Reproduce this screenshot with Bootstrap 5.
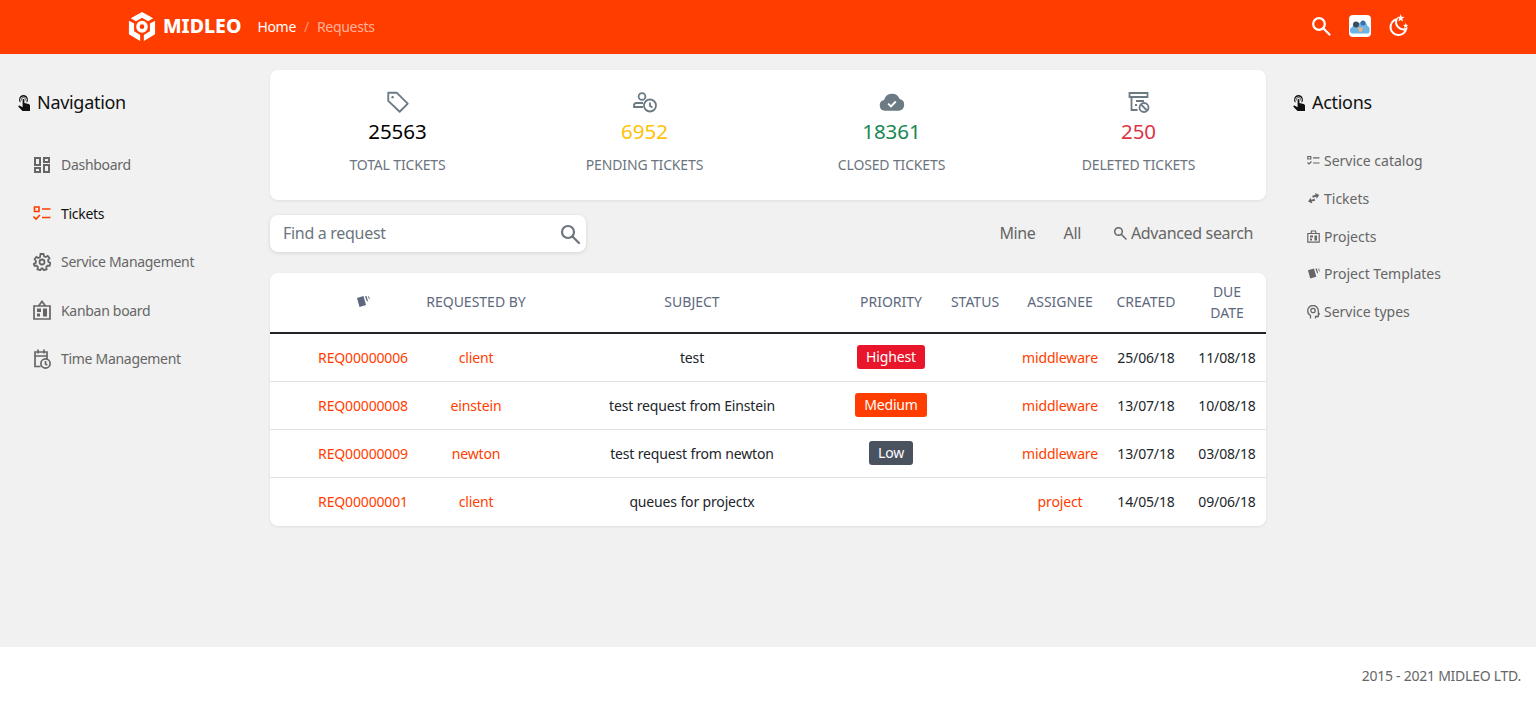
<!DOCTYPE html>
<html lang="en">
  <head>
    <meta charset="utf-8" />
    <meta name="viewport" content="width=device-width, initial-scale=1" />
    <title>Requests - MIDLEO</title>
    <link href="https://cdn.jsdelivr.net/npm/bootstrap@5.3.6/dist/css/bootstrap.min.css" rel="stylesheet" />
    <style>
      body { font-family: "Noto Sans", "Open Sans", sans-serif; font-size: 14px; background: #f1f1f1; color: #212529; }
      svg { display: block; flex: none; }
      a { text-decoration: none; }

      .top-bar { background: #ff3d00; height: 54px; padding: 0; }
      .top-inner { width: 1282px; margin: 0 0 0 128px; padding-bottom: 2px; }
      .brand-logo { gap: 7px; margin: 0 16px 0 0; padding: 0; color: #fff; }
      .brand-name { font-size: 19.5px; font-weight: 800; color: #fff; }
      .top-crumbs { font-size: 14px; letter-spacing: -.3px; --bs-breadcrumb-divider-color: rgba(255,255,255,.45); --bs-breadcrumb-item-active-color: rgba(255,255,255,.6); --bs-breadcrumb-item-padding-x: 8px; }
      .top-crumbs a { color: #fff; }
      .top-tools { gap: 18px; color: #fff; }
      .user-pic { width: 22px; height: 22px; border-radius: 4px; background: #fff; overflow: hidden; }

      .side-left { width: 270px; padding: 32px 0 0 18px; }
      .side-right { width: 270px; padding: 32px 0 0 27px; }
      .center-col { width: 996px; padding-top: 16px; }
      .side-title { font-size: 18px; font-weight: 400; letter-spacing: -.3px; color: #111; gap: 7px; height: 34px; margin: 0; }
      .left-nav { margin: 20.4px 0 0 15px; }
      .left-nav .nav-link { color: #666; gap: 10px; padding: 0; height: 48.5px; letter-spacing: -.3px; }
      .left-nav .nav-link.active { color: #111; }
      .right-nav { margin: 22px 0 0 14px; }
      .right-nav .nav-link { color: #666; gap: 4px; padding: 0; height: 37.7px; }

      .panel { border: 0; border-radius: 8px; box-shadow: 0 1px 3px rgba(0,0,0,.08); }
      .stats-panel { height: 130px; padding: 19px 4px 0; }
      .stat-box { width: 247px; color: #6c7a84; }
      .stat-icon-narrow { margin: 1px auto 3px; }
      .stat-num { font-size: 20.5px; line-height: 28px; margin-top: 2px; }
      .stat-label { font-size: 14px; letter-spacing: -.15px; color: #6c757d; margin-top: 9px; line-height: 21px; }
      .num-total { color: #000; }
      .num-pending { color: #ffc107; }
      .num-closed { color: #198754; }
      .num-deleted { color: #dc3545; }

      .tool-row { height: 37px; margin: 15px 0 21px; }
      .find-box { width: 316px; height: 37px; background: #fff; border-radius: 8px; box-shadow: 0 1px 4px rgba(0,0,0,.12); }
      .find-box .form-control { border: 0; background: none; box-shadow: none; height: 37px; padding: 0 0 2px 13px; font-size: 16px; letter-spacing: -.3px; color: #6c757d; }
      .find-box .form-control::placeholder { color: #6c757d; }
      .find-box svg { margin: 0 5px 0 0; }
      .tool-links { gap: 28px; font-size: 16px; letter-spacing: -.35px; padding: 0 13px 2px 0; }
      .tool-links a { color: #666; gap: 4px; }

      .ticket-table { table-layout: fixed; width: 996px; margin: 0; text-align: center; font-size: 14px; }
      .ticket-table th { font-weight: 400; color: #5d687e; height: 60px; padding: 4px 4px 6px; line-height: 21px; border-bottom: 2px solid #212529; vertical-align: middle; }
      .ticket-table th.due-col { padding: 4px 16px 5px; }
      .ticket-table td { height: 48px; padding: 4px; letter-spacing: -.15px; color: #212529; border-bottom: 1px solid #dee2e6; vertical-align: middle; }
      .ticket-table tr:last-child td { border-bottom: 0; height: 49px; }
      .ticket-table a { color: #ff3d00; }
      .ticket-table th svg { margin: 0 auto; }
      .prio-tag { font-size: 14px; font-weight: 400; padding: 4px 9px; border-radius: 3px; line-height: 16px; }
      .prio-highest { background: #e9162b; }
      .prio-medium { background: #ff3d00; }
      .prio-low { background: #4a5260; }

      .page-foot { background: #fff; height: 56px; padding-right: 15px; letter-spacing: -.25px; color: #666; }
    </style>
  </head>
  <body>
    <div class="d-flex flex-column vh-100">
      <nav class="navbar top-bar">
        <div class="top-inner d-flex align-items-center justify-content-between">
          <div class="d-flex align-items-center">
            <a class="navbar-brand d-flex align-items-center brand-logo" href="#">
              <svg width="28" height="31" viewBox="0 0 30 32" fill="#fff" preserveAspectRatio="none">
                <path d="M15 1 27 7.500 21.500 10.500 15 7 8.500 10.500 3 7.500Z" />
                <path d="M1 10 6.500 13V21L13 24.700V31L1 24Z" />
                <path d="M29 10 23.500 13V21L17 24.700V31L29 24Z" />
                <path fill-rule="evenodd" d="M15 10a6.200 6.200 0 1 0 0 12.400A6.200 6.200 0 0 0 15 10Zm0 3.700a2.500 2.500 0 1 1 0 5 2.500 2.500 0 0 1 0-5Z" />
              </svg>
              <span class="brand-name">MIDLEO</span>
            </a>
            <ol class="breadcrumb top-crumbs mb-0">
              <li class="breadcrumb-item"><a href="#">Home</a></li>
              <li class="breadcrumb-item active">Requests</li>
            </ol>
          </div>
          <div class="d-flex align-items-center top-tools">
            <svg width="20" height="20" viewBox="0 0 20 20" fill="none" stroke="#fff" stroke-width="2.200" stroke-linecap="round"><circle cx="8" cy="8" r="5.800" /><path d="M12.500 12.500 18.500 18.500" /></svg>
            <div class="user-pic">
              <svg width="22" height="22" viewBox="0 0 22 22">
                <path d="M3.500 18.500c-3.500 0-3.500-6 0-6.500 0-3 4-5 7-4 2.500-2.500 7.500-1.500 8 3 3 .5 3 7.500 0 7.500Z" fill="#6cb4e4" />
                <circle cx="7" cy="9.500" r="3" fill="#3f4a5a" />
                <circle cx="14" cy="8" r="2.500" fill="#3b6fa8" />
                <path d="M8.500 12.500h6L12.500 17h-2Z" fill="#e9b48a" />
              </svg>
            </div>
            <svg width="21" height="24" viewBox="0 0 21 24" fill="#fff">
              <path fill="none" stroke="#fff" stroke-width="2" d="M7.500 5.300A8 8 0 1 0 17.300 14.800 7.500 7.500 0 0 1 7.500 5.300Z" />
              <path d="M11.700 0 12.700 2.800 15.500 2.900 13.200 4.700 14.100 7.500 11.700 5.900 9.300 7.500 10.200 4.700 7.900 2.900 10.700 2.800Z" />
              <path d="M16.700 8.900 17.400 10.800 19.400 10.900 17.800 12.100 18.400 14 16.700 13 15 14 15.600 12.100 14 10.900 16 10.800Z" />
            </svg>
          </div>
        </div>
      </nav>

      <div class="d-flex flex-grow-1">
        <aside class="side-left">
          <h5 class="side-title d-flex align-items-center">
            <svg width="12" height="16" viewBox="0 0 12 16" fill="#111"><path d="M5.500 0a4.500 4.500 0 0 0-3 7.800V6.200a3.300 3.300 0 1 1 6 0v1.600a4.500 4.500 0 0 0-3-7.800Z" /><path d="M5.500 2.200a2.300 2.300 0 0 0-1.700 3.800V4.500a1.700 1.700 0 0 1 3.400 0V6a2.300 2.300 0 0 0-1.700-3.800Z" /><path d="M4.600 4.800a.9.900 0 0 1 1.800 0V8l4.200 1.100c.9.300 1.400 1 1.400 1.800V16H4.500L.6 12c-.7-.9.300-1.900 1.300-1.300l2.700 1.600Z" /></svg>
            Navigation
          </h5>
          <nav class="nav flex-column left-nav">
            <a class="nav-link d-flex align-items-center" href="#">
              <svg width="18" height="18" viewBox="0 0 18 18" fill="none" stroke="#666" stroke-width="2"><path d="M2 2h5v7H2ZM2 12h5v4H2ZM11 2h5v4h-5ZM11 9h5v7h-5Z" /></svg>
              Dashboard
            </a>
            <a class="nav-link active d-flex align-items-center" href="#">
              <svg width="18" height="18" viewBox="0 0 18 18" fill="none" stroke="#ff3d00" stroke-width="1.600"><path d="M1.500 3h4.500v4.500H1.500ZM9 5h8.500M9 13.500h8.500M.500 12.500l2.500 2.500 4-4" /></svg>
              Tickets
            </a>
            <a class="nav-link d-flex align-items-center" href="#">
              <svg width="18" height="18" viewBox="0 0 18 18" fill="none" stroke="#666" stroke-width="1.800"><path d="M7.500 1h3l.5 2.200 1.700.8 2-1 1.800 2.300-1.400 1.700.3 1.900 2 1-.8 2.800-2.200-.1-1.200 1.500.4 2.200-2.800.9-1.200-1.800H8.500l-1.200 1.800-2.800-.9.4-2.200-1.200-1.500-2.200.1L.700 10.900l2-1 .3-1.900L1.600 6.300 3.400 4l2 1L7 4.200Z" /><circle cx="9" cy="9" r="2.500" /></svg>
              Service Management
            </a>
            <a class="nav-link d-flex align-items-center" href="#">
              <svg width="18" height="20" viewBox="0 0 18 20" fill="none" stroke="#666" stroke-width="1.700"><path d="M1 6h16v13H1ZM5.500 6 9 1.500 12.500 6" /><path fill="#666" stroke="none" d="M4 8.500h4v3.500H4ZM4 13.500h3v3H4ZM10 8.500h4v8h-4Z" /></svg>
              Kanban board
            </a>
            <a class="nav-link d-flex align-items-center" href="#">
              <svg width="18" height="20" viewBox="0 0 18 20" fill="none" stroke="#666" stroke-width="1.700"><path d="M7.500 17.500H2V3h12v7M2 7h12M5 .5v4M11 .5v4" /><circle cx="12.500" cy="14.500" r="4.600" /><path d="M12.500 12v3l1.800 1" /></svg>
              Time Management
            </a>
          </nav>
        </aside>

        <main class="center-col">
          <div class="card panel stats-panel">
            <div class="d-flex text-center">
              <div class="stat-box">
                <svg class="mx-auto" width="26" height="26" viewBox="0 0 24 24" fill="none" stroke="#6c7a84" stroke-width="1.700" stroke-linejoin="round"><path d="M3 3.500h8l10 10-7.500 7.500-10.500-10Z" /><circle cx="7" cy="7.500" r="1.100" fill="#6c7a84" stroke="none" /></svg>
                <div class="stat-num num-total">25563</div>
                <div class="stat-label">TOTAL TICKETS</div>
              </div>
              <div class="stat-box">
                <svg class="stat-icon-narrow" width="24" height="24" viewBox="0 0 24 24" fill="none" stroke="#6c7a84" stroke-width="1.800"><circle cx="9" cy="6.500" r="3.400" /><path d="M10 13H3a2.500 2.500 0 0 0-2 2.500V17h9" /><circle cx="17" cy="15.500" r="6" /><path d="M17 12.500V16l2.500 1.500" /></svg>
                <div class="stat-num num-pending">6952</div>
                <div class="stat-label">PENDING TICKETS</div>
              </div>
              <div class="stat-box">
                <svg class="mx-auto" width="26" height="26" viewBox="0 0 24 24"><path fill="#6c7a84" d="M5.500 20a5 5 0 0 1-.8-9.900A7.500 7.500 0 0 1 19 9.200 5.500 5.500 0 0 1 18.500 20Z" /><path d="M8.500 13.500 11 16l4.500-4.500" fill="none" stroke="#fff" stroke-width="1.800" /></svg>
                <div class="stat-num num-closed">18361</div>
                <div class="stat-label">CLOSED TICKETS</div>
              </div>
              <div class="stat-box">
                <svg class="stat-icon-narrow" width="24" height="24" viewBox="0 0 24 24" fill="none" stroke="#6c7a84" stroke-width="1.800"><path d="M2.500 3h18v4h-18ZM4.500 7v13h6M9 11h8M8 15h2" /><circle cx="17" cy="17.500" r="4.500" /><path d="M14 14.500l6 6" /></svg>
                <div class="stat-num num-deleted">250</div>
                <div class="stat-label">DELETED TICKETS</div>
              </div>
            </div>
          </div>

          <div class="d-flex align-items-center justify-content-between tool-row">
            <div class="d-flex align-items-center find-box">
              <input class="form-control" type="text" placeholder="Find a request" />
              <svg width="22" height="22" viewBox="0 0 22 22" fill="none" stroke="#6c757d" stroke-width="2.200" stroke-linecap="round"><circle cx="9" cy="9" r="6" /><path d="M13.500 13.500 20 20" /></svg>
            </div>
            <div class="d-flex align-items-center tool-links">
              <a href="#">Mine</a>
              <a href="#">All</a>
              <a class="d-flex align-items-center ms-1" href="#">
                <svg width="14" height="14" viewBox="0 0 14 14" fill="none" stroke="#666" stroke-width="1.500" stroke-linecap="round"><circle cx="5.500" cy="5.500" r="3.800" /><path d="M8.500 8.500 13 13" /></svg>
                Advanced search
              </a>
            </div>
          </div>

          <div class="card panel overflow-hidden">
            <table class="table ticket-table">
              <colgroup>
                <col style="width: 40px" /><col style="width: 106px" /><col style="width: 120px" /><col style="width: 312px" />
                <col style="width: 86px" /><col style="width: 82px" /><col style="width: 88px" /><col style="width: 84px" /><col style="width: 78px" />
              </colgroup>
              <thead>
                <tr>
                  <th></th>
                  <th><svg width="14" height="13" viewBox="0 0 14 13" fill="#5d687e"><path d="M1 3 7.500 1l2.500 9-6.500 2Z" /><path d="M9 1.500 10.500 1l1.500 5-1 .5ZM12 1.500l1-.3.700 2.800-.7.300Z" /></svg></th>
                  <th>REQUESTED BY</th>
                  <th>SUBJECT</th>
                  <th>PRIORITY</th>
                  <th>STATUS</th>
                  <th>ASSIGNEE</th>
                  <th>CREATED</th>
                  <th class="due-col">DUE DATE</th>
                </tr>
              </thead>
              <tbody>
                <tr>
                  <td></td>
                  <td><a href="#">REQ00000006</a></td>
                  <td><a href="#">client</a></td>
                  <td>test</td>
                  <td><span class="badge prio-tag prio-highest">Highest</span></td>
                  <td></td>
                  <td><a href="#">middleware</a></td>
                  <td>25/06/18</td>
                  <td>11/08/18</td>
                </tr>
                <tr>
                  <td></td>
                  <td><a href="#">REQ00000008</a></td>
                  <td><a href="#">einstein</a></td>
                  <td>test request from Einstein</td>
                  <td><span class="badge prio-tag prio-medium">Medium</span></td>
                  <td></td>
                  <td><a href="#">middleware</a></td>
                  <td>13/07/18</td>
                  <td>10/08/18</td>
                </tr>
                <tr>
                  <td></td>
                  <td><a href="#">REQ00000009</a></td>
                  <td><a href="#">newton</a></td>
                  <td>test request from newton</td>
                  <td><span class="badge prio-tag prio-low">Low</span></td>
                  <td></td>
                  <td><a href="#">middleware</a></td>
                  <td>13/07/18</td>
                  <td>03/08/18</td>
                </tr>
                <tr>
                  <td></td>
                  <td><a href="#">REQ00000001</a></td>
                  <td><a href="#">client</a></td>
                  <td>queues for projectx</td>
                  <td></td>
                  <td></td>
                  <td><a href="#">project</a></td>
                  <td>14/05/18</td>
                  <td>09/06/18</td>
                </tr>
              </tbody>
            </table>
          </div>
        </main>

        <aside class="side-right">
          <h5 class="side-title d-flex align-items-center">
            <svg width="12" height="16" viewBox="0 0 12 16" fill="#111"><path d="M5.500 0a4.500 4.500 0 0 0-3 7.800V6.200a3.300 3.300 0 1 1 6 0v1.600a4.500 4.500 0 0 0-3-7.800Z" /><path d="M5.500 2.200a2.300 2.300 0 0 0-1.700 3.800V4.500a1.700 1.700 0 0 1 3.400 0V6a2.300 2.300 0 0 0-1.700-3.800Z" /><path d="M4.600 4.800a.9.900 0 0 1 1.800 0V8l4.200 1.100c.9.300 1.400 1 1.400 1.800V16H4.500L.6 12c-.7-.9.300-1.900 1.300-1.300l2.700 1.600Z" /></svg>
            Actions
          </h5>
          <nav class="nav flex-column right-nav">
            <a class="nav-link d-flex align-items-center" href="#">
              <svg width="13" height="13" viewBox="0 0 13 13" fill="none" stroke="#666" stroke-width="1.200"><path d="M.800 2.500h3v2.500h-3ZM6 3.800h6.500M6 9h6.500M.500 8.500 2 10l2.500-2.500" /></svg>
              Service catalog
            </a>
            <a class="nav-link d-flex align-items-center" href="#">
              <svg width="13" height="13" viewBox="0 0 13 13" fill="#666"><g transform="rotate(-15 6.500 6.500)"><path d="M6 3.500h3.500V1.500L13 4.500 9.500 7.500V5.500H6Z" /><path d="M7.500 7H4V5L.5 8 4 11V9h3.500Z" /></g></svg>
              Tickets
            </a>
            <a class="nav-link d-flex align-items-center" href="#">
              <svg width="13" height="13" viewBox="0 0 13 13" fill="none" stroke="#666" stroke-width="1.200"><path d="M.800 3.500h11.400v8.700H.800ZM4 3.500 4.500 1h4L9 3.500" /><path fill="#666" stroke="none" d="M3 5.500h3v2H3ZM3 8.500h2v2H3ZM7.500 5.500H10v5H7.500Z" /></svg>
              Projects
            </a>
            <a class="nav-link d-flex align-items-center" href="#">
              <svg width="13" height="13" viewBox="0 0 14 13" fill="#666"><path d="M1 3 7.500 1l2.500 9-6.500 2Z" /><path d="M9 1.500 10.500 1l1.500 5-1 .5ZM12 1.500l1-.3.700 2.800-.7.300Z" /></svg>
              Project Templates
            </a>
            <a class="nav-link d-flex align-items-center" href="#">
              <svg width="13" height="14" viewBox="0 0 13 14" fill="none" stroke="#666" stroke-width="1.300"><path d="M3.500 13.500V10.500C1.500 9.500.700 7.500.700 5.800a5.300 5.300 0 0 1 10.600 0v1.500l1 1.700h-1v2.500H8.500v2" /><circle cx="6" cy="5.500" r="2.200" /></svg>
              Service types
            </a>
          </nav>
        </aside>
      </div>

      <footer class="page-foot d-flex align-items-center justify-content-end">2015 - 2021 MIDLEO LTD.</footer>
    </div>
    <script src="https://cdn.jsdelivr.net/npm/bootstrap@5.3.6/dist/js/bootstrap.bundle.min.js"></script>
  </body>
</html>
